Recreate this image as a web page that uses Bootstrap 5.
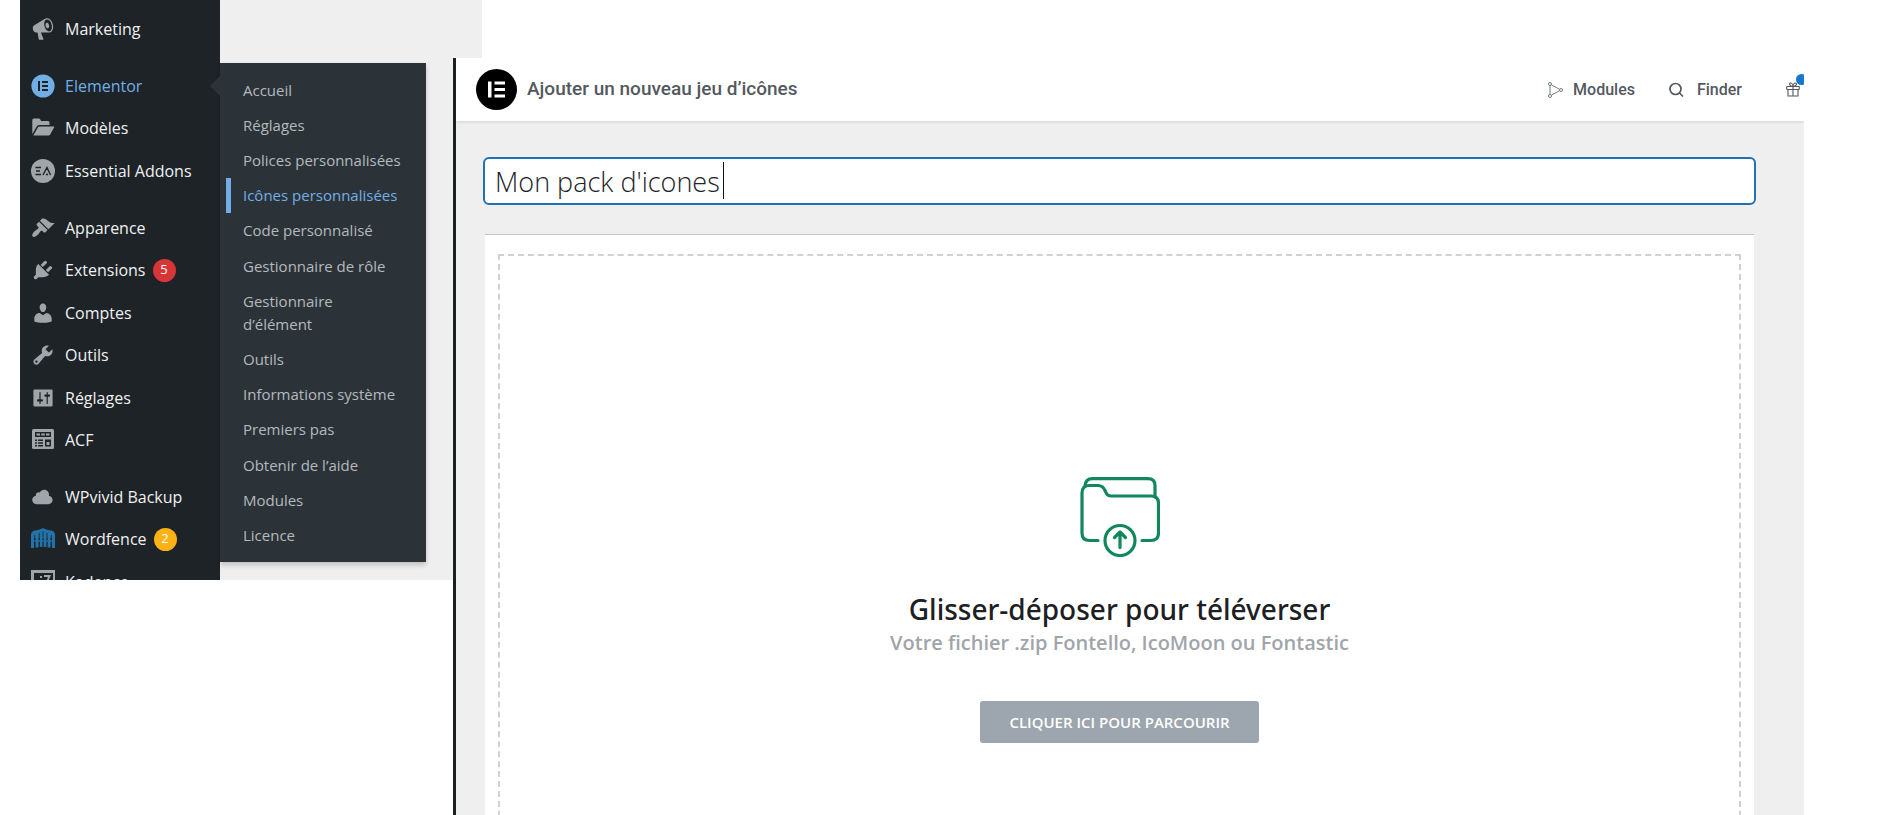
<!DOCTYPE html>
<html lang="fr">
<head>
<meta charset="utf-8">
<meta name="viewport" content="width=device-width, initial-scale=1">
<title>Ajouter un nouveau jeu d’icônes</title>
<link href="https://cdn.jsdelivr.net/npm/bootstrap@5.3.0/dist/css/bootstrap.min.css" rel="stylesheet">
<style>
  body { font-family: "Open Sans", "Noto Sans", sans-serif; background: #fff; }
  .wp-shot { width: 462px; height: 580px; background: #efefef; }
  .wp-side { width: 200px; background: #1d2327; }
  .wp-side ul { margin-bottom: 14px; }
  .side-link { height: 43px; padding-left: 11px; gap: 10px; font-size: 16px; color: #f0f0f1; text-decoration: none; white-space: nowrap; }
  li:nth-child(even) > .side-link { height: 42px; }
  .wp-side ul:first-child { margin-top: 7px; }
  .side-link svg { width: 24px; height: 24px; flex: none; fill: #a0a5aa; }
  .side-link.active { color: #72aee6; }
  .side-link.active::after { content: ""; position: absolute; right: 0; border: 10px solid transparent; border-right-color: #2c3338; border-left: 0; }
  .count { width: 23px; height: 23px; margin-left: -3px; font-size: 13px; color: #fff; }
  .count-red { background: #d63638; }
  .count-amber { background: #fcb214; }
  .wp-sub { width: 206px; margin-top: 63px; height: 499px; padding-top: 10px; background: #2c3338; box-shadow: 0 3px 5px rgba(0,0,0,.2); }
  .sub-link { padding: 6px 20px 6px 23px; line-height: 23px; font-size: 15px; color: #b4b9be; text-decoration: none; }
  li:nth-child(5n) > .sub-link { padding-bottom: 7px; }
  .sub-link.active { color: #72aee6; box-shadow: inset 5px 0 0 #72aee6; margin-left: 6px; padding-left: 17px; padding-right: 0; }
  .editor { margin: 58px 86px 0 -29px; height: calc(100vh - 58px); background: #efefef; border-left: 3px solid #1d2023; }
  .top-bar { height: 63px; padding-left: 20px; background: #fff; box-shadow: 0 1px 3px rgba(0,0,0,.12); font-family: Roboto, sans-serif; font-weight: 500; color: #54595f; }
  .top-bar h1 { font-size: 19px; font-weight: 500; margin-left: 10px; }
  .top-bar a { font-size: 16px; color: #54595f; text-decoration: none; }
  .brand-dot { width: 41px; height: 41px; }
  .dot { width: 11px; height: 11px; top: -8px; right: -7px; background: #1878c9; }
  .work { padding: 36px 48px 0 27px; }
  .title-box { height: 48px; padding: 0 10px; font-size: 27px; font-weight: 300; color: #1d2327; border: 2px solid #2271b1; border-radius: 6px; }
  .title-box:focus { border-color: #2271b1; box-shadow: none; }
  .caret { left: 240px; top: 5px; width: 1px; height: 37px; background: #111; }
  .panel { margin: 29px 2px 0; padding: 19px 13px 20px; background: #fff; border-top: 1px solid #c3c4c7; }
  .drop { padding: 221px 0; border: 2px dashed #d0d1d3; }
  .drop h2 { margin: 34px 0 0; font-family: "Noto Sans", "Open Sans", sans-serif; font-size: 28px; line-height: 36px; font-weight: 500; color: #1d2023; }
  .drop p { font-size: 20px; line-height: 32px; font-weight: 600; color: #a0a5aa; margin-bottom: 42px; }
  .browse { width: 279px; height: 42px; padding: 0; font-size: 15px; font-weight: 600; color: #fff; background: #9da5ae; border: 0; border-radius: 3px; }
</style>
</head>
<body class="overflow-hidden">
<div class="d-flex align-items-start ps-3">
  <div class="wp-shot d-flex flex-shrink-0 align-items-start overflow-hidden ms-1">
    <nav class="wp-side h-100 flex-shrink-0 overflow-hidden" aria-label="Administration">
      <ul class="list-unstyled">
        <li><a href="#" class="side-link d-flex align-items-center"><svg viewBox="0 0 20 20"><path d="M18.15 5.94c.46 1.62.38 3.22-.02 4.48-.42 1.28-1.26 2.18-2.3 2.48-.16.06-.26.06-.4.06-.06.02-.12.02-.18.02-.06.02-.14.02-.22.02h-6.8l2.22 5.5c.02.14-.06.26-.14.34-.08.1-.24.16-.34.16H6.95c-.1 0-.26-.06-.34-.16-.08-.08-.16-.2-.14-.34l-1-5.5H4.25l-.02-.02c-.5.06-1.08-.18-1.54-.62s-.88-1.08-1.06-1.88c-.24-.8-.2-1.56-.02-2.2.18-.62.58-1.08 1.06-1.3l.02-.02 9-5.4c.1-.06.18-.1.24-.16.06-.04.14-.08.24-.12.16-.08.28-.12.5-.18 1.04-.3 2.24.1 3.22.98s1.84 2.24 2.26 3.86zm-2.58 5.98h-.02c.4-.1.74-.34 1.04-.7.58-.7.86-1.76.86-3.04 0-.64-.1-1.3-.28-1.98-.34-1.36-1.02-2.5-1.78-3.24s-1.68-1.1-2.46-.88c-.82.22-1.4.96-1.7 2-.32 1.04-.28 2.36.06 3.72.38 1.36 1 2.5 1.8 3.24.78.74 1.62 1.1 2.48.88zm-2.54-7.08c.22-.04.42-.02.62.04.38.16.76.48 1.02 1s.42 1.2.42 1.78c0 .3-.04.56-.12.8-.18.48-.44.84-.86.94-.34.1-.8-.06-1.14-.4s-.64-.86-.78-1.5c-.18-.62-.12-1.24.02-1.72s.48-.84.82-.94z"/></svg>Marketing</a></li>
      </ul>
      <ul class="list-unstyled">
        <li><a href="#" class="side-link active position-relative d-flex align-items-center"><svg viewBox="0 0 24 24"><circle cx="12" cy="12" r="11.6" fill="#72aee6"/><path fill="#1d2327" d="M7 7h2v10H7zM11 7h6v2h-6zM11 11h6v2h-6zM11 15h6v2h-6z"/></svg>Elementor</a></li>
        <li><a href="#" class="side-link d-flex align-items-center"><svg viewBox="0 0 24 24"><path d="M1.300 18V4q0-1.500 1.500-1.500h5q1 0 1.500 1l.7 1.500h7q1.500 0 1.500 1.500V9H8.500q-1.700 0-2.600 1.300zM2.300 19.500 7 11.300q.5-.9 1.600-.9h14.200q.8 0 .4.800l-4 7.300q-.5 1-1.700 1z"/></svg>Modèles</a></li>
        <li><a href="#" class="side-link d-flex align-items-center"><svg viewBox="0 0 24 24"><circle cx="12" cy="12" r="12"/><path fill="none" stroke="#1d2327" stroke-width="1.400" d="M4.500 8.500H10M5 12h4M4.500 15.500H10M12 16l4-7.500 3.500 7.500M15 15.500h2"/></svg>Essential Addons</a></li>
      </ul>
      <ul class="list-unstyled">
        <li><a href="#" class="side-link d-flex align-items-center"><svg viewBox="0 0 20 20"><path d="M14.480 11.060 7.410 3.990l1.500-1.500c.5-.56 2.300-.47 3.510.32 1.210.8 1.430 1.280 2.910 2.100 1.180.64 2.450 1.260 4.450.85zm-.71.71L6.700 4.700 4.930 6.470c-.39.39-.39 1.020 0 1.410l1.060 1.060c.39.39.39 1.030 0 1.420-.6.6-1.430 1.110-2.210 1.690-.35.26-.7.53-1.010.84C1.430 14.230.4 16.080 1.400 17.070c.99 1 2.840-.03 4.180-1.360.31-.31.58-.66.85-1.020.57-.78 1.080-1.610 1.690-2.210.39-.39 1.020-.39 1.410 0l1.060 1.060c.39.39 1.020.39 1.410 0z"/></svg>Apparence</a></li>
        <li><a href="#" class="side-link d-flex align-items-center"><svg viewBox="0 0 20 20"><path d="M13.110 4.360 9.870 7.600 8 5.730l3.240-3.240c.35-.34 1.050-.2 1.560.32.52.51.66 1.210.31 1.550zm-8 1.770.91-1.120 9.010 9.010-1.190.84c-.71.71-2.630 1.160-3.820 1.160H6.140L4.900 17.260c-.59.59-1.540.59-2.120 0-.59-.58-.59-1.530 0-2.120l1.240-1.240v-3.880c0-1.130.4-3.190 1.090-3.890zm7.260 3.970 3.240-3.240c.34-.35 1.040-.21 1.550.31.52.51.66 1.210.31 1.550l-3.240 3.250z"/></svg>Extensions<span class="count count-red rounded-circle d-flex align-items-center justify-content-center">5</span></a></li>
        <li><a href="#" class="side-link d-flex align-items-center"><svg viewBox="0 0 20 20"><path d="M10 9.250c-2.270 0-2.730-3.440-2.730-3.440C7 4.020 7.820 2 9.970 2c2.160 0 2.980 2.020 2.710 3.810 0 0-.41 3.440-2.680 3.440zm0 2.570L12.720 10c2.390 0 4.520 2.330 4.520 4.530v2.490s-3.650 1.130-7.240 1.130c-3.650 0-7.240-1.130-7.240-1.130v-2.490c0-2.250 1.940-4.480 4.470-4.480z"/></svg>Comptes</a></li>
        <li><a href="#" class="side-link d-flex align-items-center"><svg viewBox="0 0 20 20"><path d="M16.680 9.770c-1.340 1.340-3.300 1.670-4.950.99l-5.410 6.520c-.99.99-2.590.99-3.580 0s-.99-2.590 0-3.570l6.520-5.420c-.68-1.650-.35-3.610.99-4.950 1.280-1.280 3.120-1.620 4.720-1.060l-2.890 2.890 2.820 2.820 2.860-2.870c.53 1.580.18 3.390-1.080 4.650zM3.810 16.210c.4.39 1.040.39 1.430 0 .4-.4.4-1.040 0-1.430-.39-.4-1.030-.4-1.430 0-.39.39-.39 1.030 0 1.430z"/></svg>Outils</a></li>
        <li><a href="#" class="side-link d-flex align-items-center"><svg viewBox="0 0 20 20"><path d="M18 16V4c0-.55-.45-1-1-1H3c-.55 0-1 .45-1 1v12c0 .55.45 1 1 1h14c.55 0 1-.45 1-1zM8 11h1c.55 0 1 .45 1 1s-.45 1-1 1H8v1.500c0 .28-.22.5-.5.5s-.5-.22-.5-.5V13H6c-.55 0-1-.45-1-1s.45-1 1-1h1V5.500c0-.28.22-.5.5-.5s.5.22.5.5V11zm5-2h-1c-.55 0-1-.45-1-1s.45-1 1-1h1V5.500c0-.28.22-.5.5-.5s.5.22.5.5V7h1c.55 0 1 .45 1 1s-.45 1-1 1h-1v5.500c0 .28-.22.5-.5.5s-.5-.22-.5-.5V9z"/></svg>Réglages</a></li>
        <li><a href="#" class="side-link d-flex align-items-center"><svg viewBox="0 0 24 24"><rect x="1" y="1" width="22" height="20" rx="1.500"/><path fill="#1d2327" d="M4 4h16v5H4zM4 11.500h2V13H4zM7 11.500h5V13H7zM4 14.300h2v1.500H4zM7 14.300h5v1.500H7zM4 17h2v1.500H4zM7 17h5v1.500H7zM14 11.500h6v7h-6z"/><path d="M5.500 5.500H9v2H5.500zM10.300 5.500h3.500v2h-3.500zM15 5.500h3.500v2H15zM15.500 14h3v3h-3z"/></svg>ACF</a></li>
      </ul>
      <ul class="list-unstyled">
        <li><a href="#" class="side-link d-flex align-items-center"><svg viewBox="0 0 20 20"><path d="M14.900 9c1.800.2 3.100 1.700 3.100 3.500 0 1.900-1.600 3.500-3.500 3.500h-10C2.600 16 1 14.400 1 12.500 1 10.700 2.300 9.300 4.100 9 4 8.900 4 8.700 4 8.500 4 7.100 5.100 6 6.500 6c.3 0 .7.1.9.2C8.100 4.900 9.400 4 11 4c2.200 0 4 1.800 4 4 0 .4-.1.7-.1 1z"/></svg>WPvivid Backup</a></li>
        <li><a href="#" class="side-link d-flex align-items-center"><svg viewBox="0 0 24 24"><g fill="#2173a8"><path d="M0 8Q0 4 4 3.500 8 3.300 12 1q4 2.300 8 2.500 4 .5 4 4.500v3H0z"/><path d="M0 11h3v10H0zM4.500 11h3v9.500h-3zM8.800 11h2.700v9H8.800zM12.700 11h2.700v9h-2.700zM16.600 11h3v9.500h-3zM21 11h3v10h-3z"/></g><path fill="none" stroke="#1d2327" stroke-width=".8" d="M3.700 8v4M8.200 6v5M12 4.500V10M16 6v5M20.300 8v4"/><path stroke="#2173a8" stroke-width="1.300" d="M0 14h24"/></svg>Wordfence<span class="count count-amber rounded-circle d-flex align-items-center justify-content-center">2</span></a></li>
        <li><a href="#" class="side-link d-flex align-items-center"><svg viewBox="0 0 24 24"><path fill-rule="evenodd" d="M0 0h24v24H0zM3 3v18h19V3z"/><path d="M13 5h7l-3 7h-2l2-5h-4zM9 6h2v2H9zM8 10h3v9H8z"/></svg>Kadence</a></li>
      </ul>
    </nav>
    <nav class="wp-sub flex-shrink-0" aria-label="Elementor">
      <ul class="list-unstyled mb-0">
        <li><a href="#" class="sub-link d-block">Accueil</a></li>
        <li><a href="#" class="sub-link d-block">Réglages</a></li>
        <li><a href="#" class="sub-link d-block">Polices personnalisées</a></li>
        <li><a href="#" class="sub-link active d-block">Icônes personnalisées</a></li>
        <li><a href="#" class="sub-link d-block">Code personnalisé</a></li>
        <li><a href="#" class="sub-link d-block">Gestionnaire de rôle</a></li>
        <li><a href="#" class="sub-link d-block">Gestionnaire<br>d’élément</a></li>
        <li><a href="#" class="sub-link d-block">Outils</a></li>
        <li><a href="#" class="sub-link d-block">Informations système</a></li>
        <li><a href="#" class="sub-link d-block">Premiers pas</a></li>
        <li><a href="#" class="sub-link d-block">Obtenir de l’aide</a></li>
        <li><a href="#" class="sub-link d-block">Modules</a></li>
        <li><a href="#" class="sub-link d-block">Licence</a></li>
      </ul>
    </nav>
  </div>

  <main class="editor flex-grow-1 overflow-hidden">
    <header class="top-bar d-flex align-items-center">
      <svg class="brand-dot flex-shrink-0" viewBox="0 0 41 41"><circle cx="20.500" cy="20.500" r="20.500"/><path fill="#fff" d="M12 12.500h3.500v16H12zM18.500 12.500H29v3H18.500zM18.500 19H29v3H18.500zM18.500 25.500H29v3H18.500z"/></svg>
      <h1 class="mb-0">Ajouter un nouveau jeu d’icônes</h1>
      <nav class="ms-auto d-flex align-items-center" aria-label="Outils">
        <a href="#" class="d-flex align-items-center me-4 pe-2"><svg class="me-2" width="18" height="18" viewBox="0 0 18 18" fill="none" stroke="#777c82"><circle cx="3" cy="3" r="1.500"/><circle cx="3" cy="15" r="1.500"/><circle cx="14" cy="9" r="1.500"/><path d="M3 4.500v9M4.300 3.800 12.600 8.300M4.300 14.200 12.600 9.700"/></svg>Modules</a>
        <a href="#" class="d-flex align-items-center me-4 pe-3"><svg class="me-2" width="22" height="18" viewBox="0 0 22 18" fill="none" stroke="#54595f" stroke-width="1.700"><circle cx="8.500" cy="8" r="5.500"/><path d="m12.500 12 3.500 3.500"/></svg>Finder</a>
        <a href="#" class="position-relative d-flex me-1" aria-label="Nouveautés"><svg class="ms-1" width="14" height="15" viewBox="0 0 14 15" fill="none" stroke="#54595f" stroke-width="1.100"><rect x=".7" y="4.500" width="12.600" height="3" rx=".6"/><path d="M2 7.500V14h10V7.500M7 4.500V14M7 4.500C3 4.500 3 1 4.500 1S7 3 7 4.500C7 3 8 1 9.500 1S11 4.500 7 4.500"/></svg><span class="dot position-absolute rounded-circle"></span></a>
      </nav>
    </header>
    <div class="work">
      <div class="position-relative">
        <input type="text" class="title-box form-control" aria-label="Titre du jeu d’icônes" value="Mon pack d'icones">
        <span class="caret position-absolute"></span>
      </div>
      <section class="panel">
        <div class="drop text-center">
          <svg class="d-block mx-auto" width="80" height="80" viewBox="0 0 80 80" fill="none" stroke="#12875c" stroke-width="3.200" stroke-linecap="round" stroke-linejoin="round"><path d="M18 63.500H9.500Q2 63.500 2 56V16Q2 8.500 9.500 8.500H18q5 0 7 5l.7 1.500q1.500 4 5.500 4H71q7.500 0 7.500 7.500V56q0 7.500-7.500 7.500H62"/><path d="M5 9Q5.500 1.600 12.500 1.600H68q7 0 7 7V20"/><circle cx="40" cy="63.500" r="15"/><path d="M40 70.500V55.500M34.500 60.500l5.500-5.500 5.500 5.500"/></svg>
          <h2>Glisser-déposer pour téléverser</h2>
          <p>Votre fichier .zip Fontello, IcoMoon ou Fontastic</p>
          <button type="button" class="browse btn">CLIQUER ICI POUR PARCOURIR</button>
        </div>
      </section>
    </div>
  </main>
</div>
<script src="https://cdn.jsdelivr.net/npm/bootstrap@5.3.0/dist/js/bootstrap.bundle.min.js"></script>
</body>
</html>
